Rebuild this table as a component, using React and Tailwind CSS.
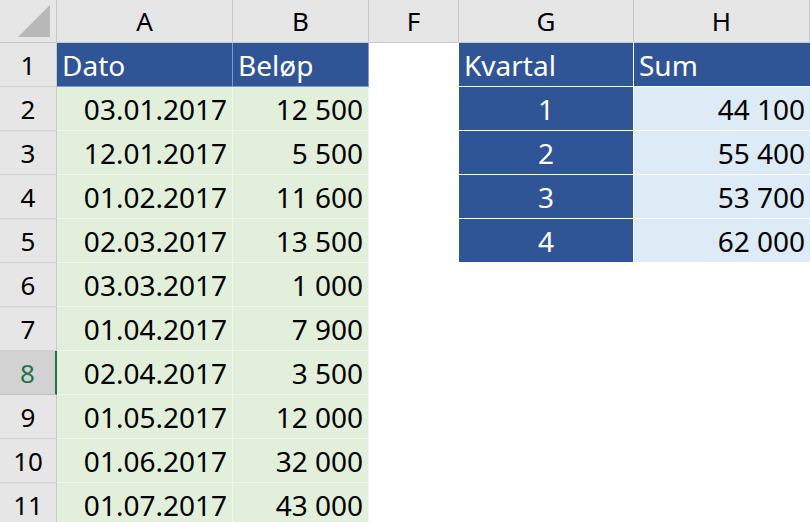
const dates = [
  ['03.01.2017', '12 500'],
  ['12.01.2017', '5 500'],
  ['01.02.2017', '11 600'],
  ['02.03.2017', '13 500'],
  ['03.03.2017', '1 000'],
  ['01.04.2017', '7 900'],
  ['02.04.2017', '3 500'],
  ['01.05.2017', '12 000'],
  ['01.06.2017', '32 000'],
  ['01.07.2017', '43 000'],
];

const sums = ['44 100', '55 400', '53 700', '62 000'];

const ColHead = ({ children }) => (
  <div className="h-[43px] flex items-center justify-center bg-[#e6e6e6] border-r border-b border-[#c9c9c9] text-[26px] text-black">
    {children}
  </div>
);

const RowHead = ({ n, active }) => (
  <div
    className={`h-[44px] flex items-center justify-center border-b text-[26px] ${
      active
        ? 'bg-[#d2d2d2] text-[#217346] border-[#c0c0c0] border-r-2 border-r-[#217346]'
        : 'bg-[#e6e6e6] text-black border-[#d0d0d0] border-r border-r-[#c9c9c9]'
    }`}
  >
    {n}
  </div>
);

const Cell = ({ children, className = '' }) => (
  <div className={`h-[44px] flex items-center px-[5px] whitespace-nowrap overflow-hidden ${className}`}>
    {children}
  </div>
);

export default function App() {
  const blueHead = 'bg-[#2f5597] text-white border-b border-r border-[#7f9bcf]';
  const green = 'bg-[#e2efda] text-black justify-end border-b border-r border-[#f2f7ee]';

  return (
    <div
      className="w-[810px] h-[522px] overflow-hidden bg-white"
      style={{ fontFamily: '"Noto Sans", "Open Sans", sans-serif' }}
    >
      <div className="grid grid-cols-[57px_176px_136px_90px_175px_176px] text-[28px] leading-none">
        {/* column headers */}
        <div className="h-[43px] relative bg-[#e6e6e6] border-r border-b border-[#c9c9c9]">
          <svg className="absolute right-[6px] bottom-[5px]" width="32" height="32" viewBox="0 0 32 32">
            <polygon points="32,0 32,32 0,32" fill="#b9b9b9" />
          </svg>
        </div>
        <ColHead>A</ColHead>
        <ColHead>B</ColHead>
        <ColHead>F</ColHead>
        <ColHead>G</ColHead>
        <ColHead>H</ColHead>

        {/* row 1 */}
        <RowHead n={1} />
        <Cell className={blueHead}>Dato</Cell>
        <Cell className={blueHead}>Beløp</Cell>
        <Cell className="bg-white" />
        <Cell className="bg-[#2f5597] text-white border-b border-r border-white">Kvartal</Cell>
        <Cell className="bg-[#2f5597] text-white border-b border-white">Sum</Cell>

        {dates.map(([d, b], i) => {
          const row = i + 2;
          const q = i < 4 ? i + 1 : null;
          return [
            <RowHead key={`h${row}`} n={row} active={row === 8} />,
            <Cell key={`a${row}`} className={green}>{d}</Cell>,
            <Cell key={`b${row}`} className={green}>{b}</Cell>,
            <Cell key={`f${row}`} className="bg-white" />,
            q ? (
              <Cell key={`g${row}`} className="bg-[#2f5597] text-white justify-center border-b border-r border-white">
                {q}
              </Cell>
            ) : (
              <Cell key={`g${row}`} className="bg-white" />
            ),
            q ? (
              <Cell key={`hh${row}`} className="bg-[#ddebf7] text-black justify-end border-b border-white">
                {sums[i]}
              </Cell>
            ) : (
              <Cell key={`hh${row}`} className="bg-white" />
            ),
          ];
        })}
      </div>
    </div>
  );
}
